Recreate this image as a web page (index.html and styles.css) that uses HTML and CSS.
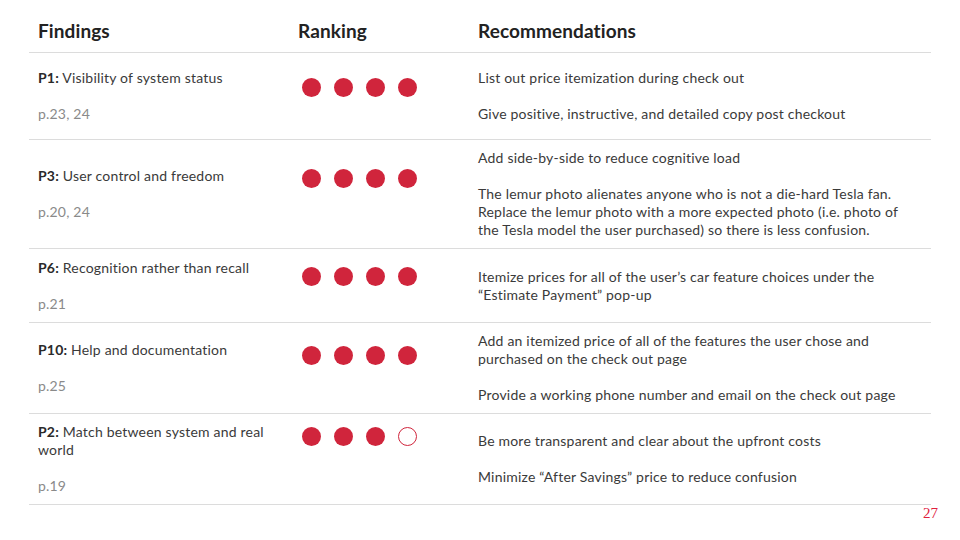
FILE: index.html
```html
<!DOCTYPE html>
<html lang="en">
<head>
<meta charset="utf-8">
<title>Findings</title>
<link rel="stylesheet" href="styles.css">
</head>
<body>
<div class="slide">
  <div class="table">
    <div class="row head">
      <div class="cell find">Findings</div>
      <div class="cell rank">Ranking</div>
      <div class="cell recs">Recommendations</div>
    </div>

    <div class="row tall">
      <div class="cell find">
        <p class="title"><b>P1:</b> Visibility of system status</p>
        <p class="page">p.23, 24</p>
      </div>
      <div class="cell rank dots d1">
        <span class="dot"></span><span class="dot"></span><span class="dot"></span><span class="dot"></span>
      </div>
      <div class="cell recs">
        <p>List out price itemization during check out</p>
        <p>Give positive, instructive, and detailed copy post checkout</p>
      </div>
    </div>

    <div class="row">
      <div class="cell find">
        <p class="title"><b>P3:</b> User control and freedom</p>
        <p class="page">p.20, 24</p>
      </div>
      <div class="cell rank dots d2">
        <span class="dot"></span><span class="dot"></span><span class="dot"></span><span class="dot"></span>
      </div>
      <div class="cell recs">
        <p>Add side-by-side to reduce cognitive load</p>
        <p>The lemur photo alienates anyone who is not a die-hard Tesla fan. Replace the lemur photo with a more expected photo (i.e. photo of the Tesla model the user purchased) so there is less confusion.</p>
      </div>
    </div>

    <div class="row mid">
      <div class="cell find">
        <p class="title"><b>P6:</b> Recognition rather than recall</p>
        <p class="page">p.21</p>
      </div>
      <div class="cell rank dots d3">
        <span class="dot"></span><span class="dot"></span><span class="dot"></span><span class="dot"></span>
      </div>
      <div class="cell recs">
        <p>Itemize prices for all of the user’s car feature choices under the “Estimate Payment” pop-up</p>
      </div>
    </div>

    <div class="row">
      <div class="cell find">
        <p class="title"><b>P10:</b> Help and documentation</p>
        <p class="page">p.25</p>
      </div>
      <div class="cell rank dots d4">
        <span class="dot"></span><span class="dot"></span><span class="dot"></span><span class="dot"></span>
      </div>
      <div class="cell recs">
        <p>Add an itemized price of all of the features the user chose and purchased on the check out page</p>
        <p>Provide a working phone number and email on the check out page</p>
      </div>
    </div>

    <div class="row">
      <div class="cell find">
        <p class="title"><b>P2:</b> Match between system and real world</p>
        <p class="page">p.19</p>
      </div>
      <div class="cell rank dots d5">
        <span class="dot"></span><span class="dot"></span><span class="dot"></span><span class="dot empty"></span>
      </div>
      <div class="cell recs">
        <p>Be more transparent and clear about the upfront costs</p>
        <p>Minimize “After Savings” price to reduce confusion</p>
      </div>
    </div>
  </div>
  <div class="pagenum">27</div>
</div>
</body>
</html>
```

FILE: styles.css
```css
html, body {
  margin: 0;
  padding: 0;
  background: #ffffff;
}

.slide {
  width: 960px;
  height: 540px;
  box-sizing: border-box;
  padding: 10px 29px 0 29px;
  font-family: "Lato", "Open Sans", sans-serif;
  font-size: 14px;
  line-height: 18px;
  letter-spacing: 0.2px;
  color: #3a3a3a;
}

.table {
  display: flex;
  flex-direction: column;
}

.row {
  display: grid;
  grid-template-columns: 260px 180px 1fr;
  align-items: center;
  border-bottom: 1px solid #dcdcdc;
  padding: 9px 0 9px;
}

.row.tall {
  padding: 16px 0 16px;
}

.row.mid {
  padding: 10px 0 9px;
}

.row.head {
  padding: 0;
  height: 42px;
  font-weight: 700;
  font-size: 19px;
  letter-spacing: 0.1px;
  color: #222222;
}

.cell {
  padding-left: 9px;
}

.recs {
  padding-right: 14px;
}

.find {
  padding-right: 14px;
}

.cell p {
  margin: 0;
}

.recs p + p {
  margin-top: 18px;
}

.find .page {
  margin-top: 18px;
  color: #8a8a8a;
}

.find b {
  font-weight: 700;
  color: #2a2a2a;
}

.dots {
  display: flex;
  gap: 13px;
  padding-left: 13px;
  align-self: start;
}

.d1 { margin-top: 9px; }
.d2 { margin-top: 20px; }
.d3 { margin-top: 8px; }
.d4 { margin-top: 14px; }
.d5 { margin-top: 4px; }

.dot {
  width: 19px;
  height: 19px;
  border-radius: 50%;
  background: #d0253c;
  box-sizing: border-box;
}

.dot.empty {
  background: #ffffff;
  border: 1.2px solid #d0253c;
}

.pagenum {
  text-align: right;
  margin-right: -7px;
  margin-top: -1px;
  font-family: "Liberation Serif", "Times New Roman", serif;
  font-size: 15px;
  line-height: 18px;
  letter-spacing: 0;
  color: #e0203c;
}
```
